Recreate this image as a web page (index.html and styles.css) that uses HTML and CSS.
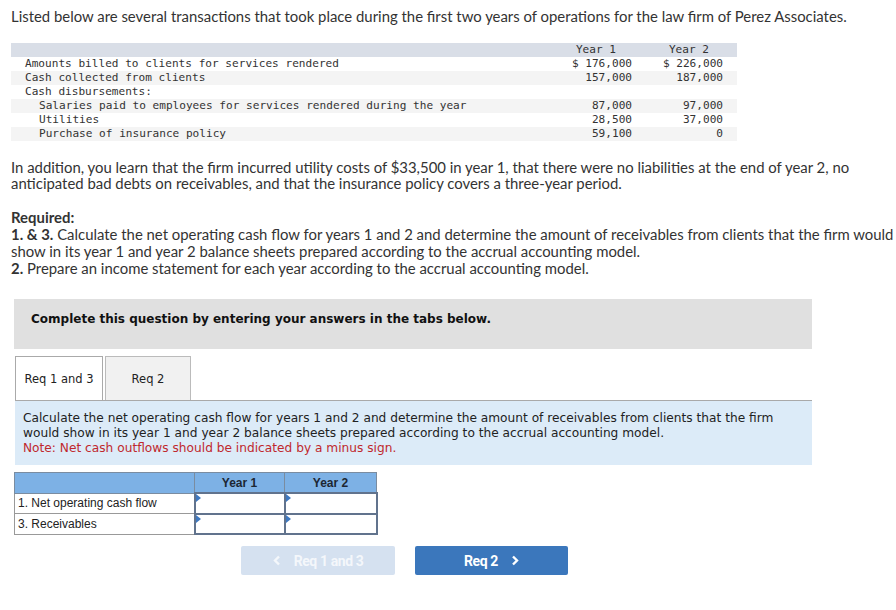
FILE: index.html
```html
<!DOCTYPE html>
<html>
<head>
<meta charset="utf-8">
<link rel="stylesheet" href="styles.css">
</head>
<body>
<p class="intro">Listed below are several transactions that took place during the first two years of operations for the law firm of Perez Associates.</p>
<table class="data">
  <thead>
    <tr><th class="lbl"></th><th class="num">Year 1</th><th class="num">Year 2</th></tr>
  </thead>
  <tbody>
    <tr><td class="lbl">Amounts billed to clients for services rendered</td><td class="num">$ 176,000</td><td class="num">$ 226,000</td></tr>
    <tr class="alt"><td class="lbl">Cash collected from clients</td><td class="num">157,000</td><td class="num">187,000</td></tr>
    <tr><td class="lbl">Cash disbursements:</td><td class="num"></td><td class="num"></td></tr>
    <tr class="alt"><td class="lbl ind">Salaries paid to employees for services rendered during the year</td><td class="num">87,000</td><td class="num">97,000</td></tr>
    <tr><td class="lbl ind">Utilities</td><td class="num">28,500</td><td class="num">37,000</td></tr>
    <tr class="alt"><td class="lbl ind">Purchase of insurance policy</td><td class="num">59,100</td><td class="num">0</td></tr>
  </tbody>
</table>
<p class="para">In addition, you learn that the firm incurred utility costs of $33,500 in year 1, that there were no liabilities at the end of year 2, no anticipated bad debts on receivables, and that the insurance policy covers a three-year period.</p>
<div class="req">
  <div class="b">Required:</div>
  <div><span class="b">1. &amp; 3.</span> Calculate the net operating cash flow for years 1 and 2 and determine the amount of receivables from clients that the firm would show in its year 1 and year 2 balance sheets prepared according to the accrual accounting model.</div>
  <div><span class="b">2.</span> Prepare an income statement for each year according to the accrual accounting model.</div>
</div>
<div class="complete">Complete this question by entering your answers in the tabs below.</div>
<div class="tabs">
  <div class="tab active">Req 1 and 3</div>
  <div class="tab">Req 2</div>
</div>
<div class="panel">
  <div>Calculate the net operating cash flow for years 1 and 2 and determine the amount of receivables from clients that the firm would show in its year 1 and year 2 balance sheets prepared according to the accrual accounting model.</div>
  <div class="note">Note: Net cash outflows should be indicated by a minus sign.</div>
</div>
<table class="ans">
  <thead>
    <tr><th class="alabel"></th><th>Year 1</th><th>Year 2</th></tr>
  </thead>
  <tbody>
    <tr><td class="alabel">1. Net operating cash flow</td><td class="in"><span class="tri"></span></td><td class="in"><span class="tri"></span></td></tr>
    <tr><td class="alabel">3. Receivables</td><td class="in"><span class="tri"></span></td><td class="in"><span class="tri"></span></td></tr>
  </tbody>
</table>
<div class="nav">
  <button class="btn prev"><svg class="chev" width="8" height="11" viewBox="0 0 8 11"><polyline points="6,1.5 2,5.5 6,9.5" fill="none" stroke="currentColor" stroke-width="2.4"/></svg><span>Req 1 and 3</span></button>
  <button class="btn next"><span>Req 2</span><svg class="chev" width="8" height="11" viewBox="0 0 8 11"><polyline points="2,1.5 6,5.5 2,9.5" fill="none" stroke="currentColor" stroke-width="2.4"/></svg></button>
</div>
</body>
</html>
```
FILE: styles.css
```css
html, body { margin: 0; padding: 0; background: #fff; }
body {
  padding: 8px 6px 0 11px;
  font-family: "Lato", "Liberation Sans", sans-serif;
  font-size: 14.9px;
  color: #333;
}
.intro { margin: 0; line-height: 16px; }
.data {
  margin-top: 19px;
  border-collapse: collapse;
  width: 726px;
  font-family: "DejaVu Sans Mono", monospace;
  font-size: 11.1px;
  line-height: 14px;
  color: #333;
}
.data th, .data td { padding: 0; height: 14px; }
.data thead tr { background: #d9dee7; }
.data th { font-weight: normal; }
.data th.num { text-align: right; padding-right: 30px; width: 61px; }
.data th.num:last-child { padding-right: 28px; width: 63px; }
.data td.num { text-align: right; padding-right: 14px; width: 77px; white-space: pre; }
.data .lbl { text-align: left; padding-left: 14px; }
.data .ind { padding-left: 28px; }
.data tr.alt { background: #f4f4f4; }
.para { margin: 18px 0 0; line-height: 16px; }
.req { margin: 18px -8px 0 0; line-height: 17px; }
.b { font-weight: bold; }
.complete {
  box-sizing: border-box;
  margin: 22px 0 0 3px;
  width: 798px;
  height: 50px;
  padding: 13px 0 0 17px;
  background: #e0e0e0;
  font-family: "DejaVu Sans", Verdana, sans-serif;
  font-weight: bold;
  font-size: 12px;
  line-height: 15px;
  color: #111;
}
.tabs { display: flex; gap: 2px; margin: 7px 0 0 4px; height: 44px; }
.tab {
  box-sizing: border-box;
  width: 86px;
  border: 1px solid #bbb;
  border-bottom: none;
  background: #f1f1f1;
  display: flex;
  align-items: center;
  justify-content: center;
  font-family: "DejaVu Sans", Verdana, sans-serif;
  font-size: 11.5px;
  color: #222;
}
.tab.active { width: 88px; background: #fff; border-color: #aaa; }
.panel {
  margin-left: 4px;
  width: 759px;
  padding: 10px 30px 9px 8px;
  background: #dcebf8;
  border-top: 1px solid #a9a9a9;
  font-family: "DejaVu Sans", Verdana, sans-serif;
  font-size: 12.2px;
  line-height: 15px;
  color: #222;
}
.note { color: #c0282d; }
.ans {
  margin: 7px 0 0 3px;
  border-collapse: collapse;
  font-family: "Liberation Sans", Arial, sans-serif;
  font-size: 12px;
  color: #222;
}
.ans th {
  background: #7db1e5;
  border: 1px solid #7a8ca0;
  height: 19px;
  padding: 0;
  font-weight: bold;
  color: #1c2733;
}
.ans th.alabel { width: 179px; }
.ans th:nth-child(2) { width: 89px; }
.ans th:nth-child(3) { width: 91px; }
.ans td { padding: 0; height: 18.5px; }
.ans td.alabel { border: 1px solid #999; padding-left: 3px; }
.ans td.in { border: 2px solid #61738d; position: relative; background: #fff; }
.tri {
  position: absolute;
  left: 0;
  top: 0;
  width: 0;
  height: 0;
  border-top: 4px solid transparent;
  border-bottom: 4px solid transparent;
  border-left: 5px solid #3e78c0;
}
.nav { display: flex; gap: 20px; margin: 11px 0 0 230px; }
.btn {
  width: 154px;
  height: 29px;
  border: none;
  border-radius: 2px;
  display: flex;
  align-items: center;
  justify-content: center;
  gap: 13px;
  padding: 0;
  font-family: "Roboto", "Liberation Sans", sans-serif;
  font-weight: bold;
  font-size: 14px;
  letter-spacing: -0.4px;
  color: #fff;
}
.btn.prev { background: #d5e1f0; color: #f4f7fb; }
.btn.next { background: #3b77bc; width: 153px; }
.chev { display: block; }
```
